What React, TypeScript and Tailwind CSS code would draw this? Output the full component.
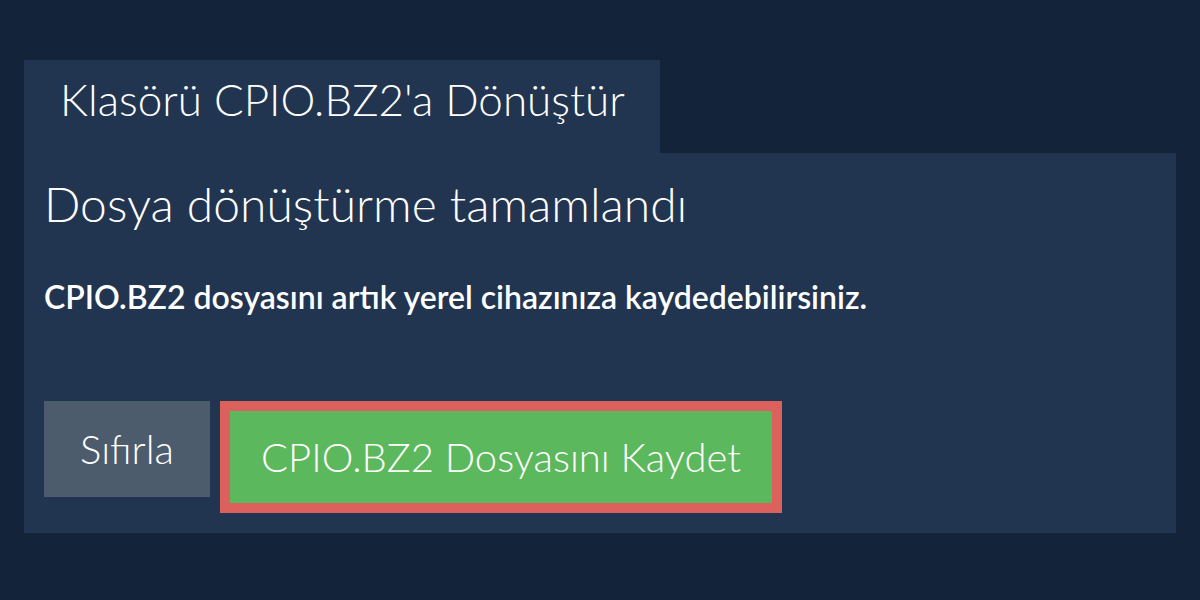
import React from "react";

export default function App() {
  return (
    <div className="w-[1200px] h-[600px] bg-[#12233a] pt-[60px] px-6 font-['Lato','Noto_Sans',sans-serif] text-white">
      <div className="flex">
        <div className="w-[636px] h-[93px] bg-[#213550] pl-9 pt-[17px]">
          <h1 className="text-[44px] font-light leading-none whitespace-nowrap">Klasörü CPIO.BZ2'a Dönüştür</h1>
        </div>
      </div>
      <div className="bg-[#213550] px-5 pt-[27px] pb-[20px]">
        <h2 className="text-[48px] font-light leading-none">Dosya dönüştürme tamamlandı</h2>
        <p className="mt-[53px] text-[32px] font-semibold leading-none">
          CPIO.BZ2 dosyasını artık yerel cihazınıza kaydedebilirsiniz.
        </p>
        <div className="mt-[88px] flex items-start gap-[10px]">
          <button className="w-[166px] h-[96px] bg-[#4c5c6d] text-[40px] font-light leading-none">Sıfırla</button>
          <div className="border-[10px] border-[#dc605c]">
            <button className="w-[542px] h-[92px] bg-[#5cb85c] text-[40px] font-light leading-none whitespace-nowrap">
              CPIO.BZ2 Dosyasını Kaydet
            </button>
          </div>
        </div>
      </div>
    </div>
  );
}
